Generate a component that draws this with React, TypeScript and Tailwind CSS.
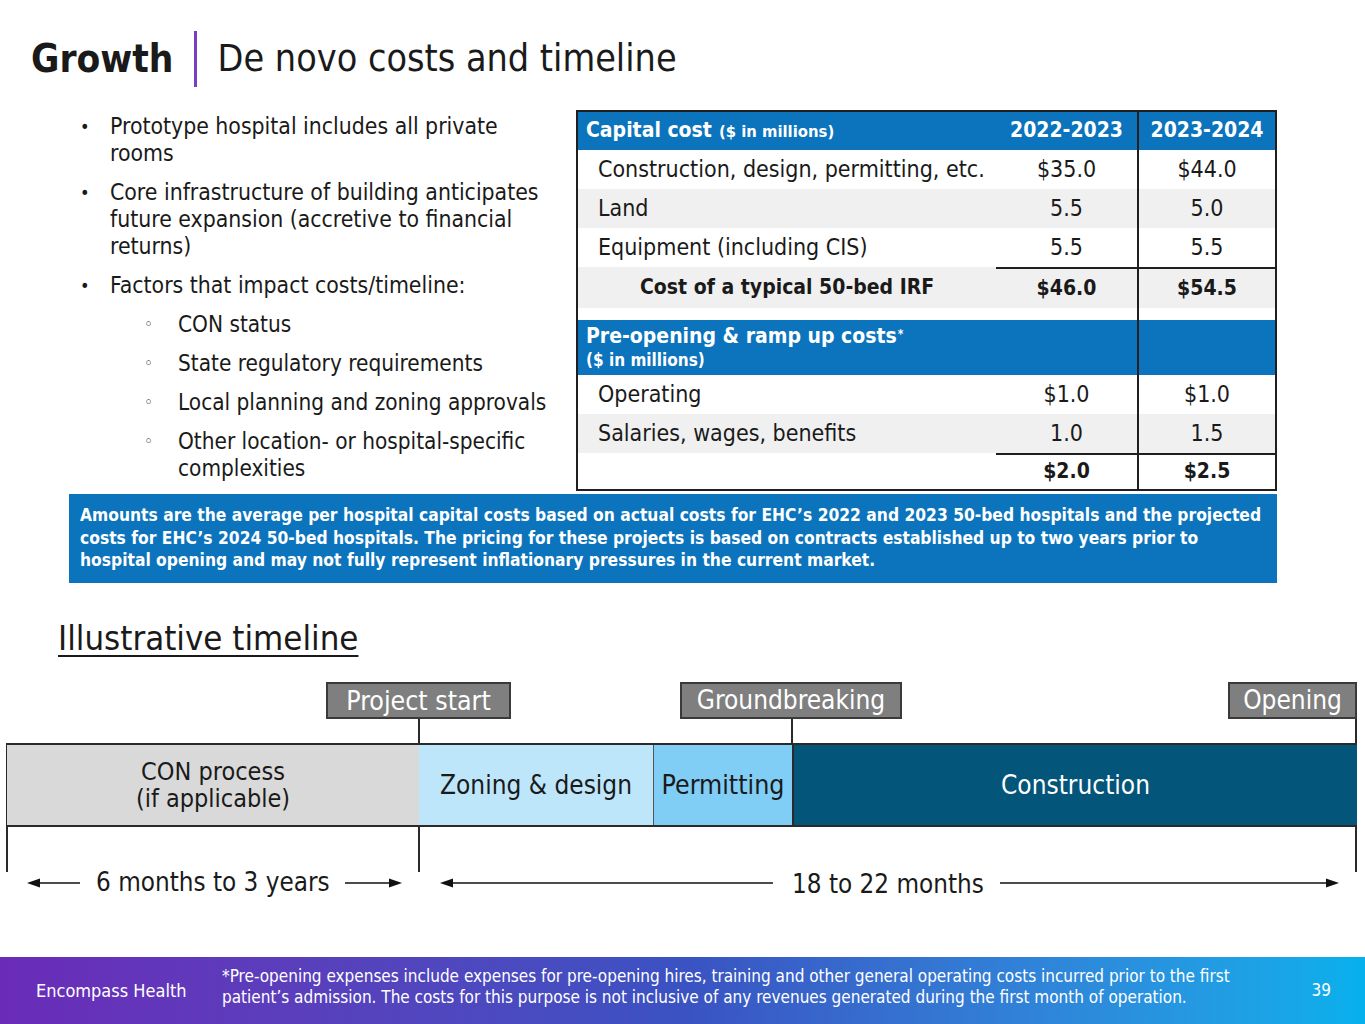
export default function App() {
  const blue = "bg-[#0b74bd]";
  return (
    <div className="w-[1365px] h-[1024px] bg-white flex flex-col overflow-hidden text-[#1a1a1a] font-['DejaVu_Sans_Condensed','DejaVu_Sans',sans-serif] font-stretch-condensed">
      {/* Header */}
      <div className="h-[110px] flex-none pl-[31px] pt-[31px]">
        <div className="flex items-center h-[56px]">
          <span className="text-[38.5px] font-bold leading-none">Growth</span>
          <span className="w-[3px] h-[56px] bg-[#7a3fc0] ml-[20px] mr-[21px]"></span>
          <span className="text-[37.4px] leading-none">De novo costs and timeline</span>
        </div>
      </div>

      {/* Content */}
      <div className="flex h-[381px] flex-none">
        <div className="w-[576px] flex-none pl-[80px] pt-[3px] text-[22.8px] leading-[27px]">
          <div className="flex">
            <span className="w-[30px] flex-none text-[18px]">•</span>
            <span>Prototype hospital includes all private<br />rooms</span>
          </div>
          <div className="flex mt-[12px]">
            <span className="w-[30px] flex-none text-[18px]">•</span>
            <span>Core infrastructure of building anticipates<br />future expansion (accretive to financial<br />returns)</span>
          </div>
          <div className="flex mt-[12px]">
            <span className="w-[30px] flex-none text-[18px]">•</span>
            <span>Factors that impact costs/timeline:</span>
          </div>
          {["CON status", "State regulatory requirements", "Local planning and zoning approvals"].map((t) => (
            <div key={t} className="flex mt-[12px] pl-[64px] text-[22.4px]">
              <span className="w-[34px] flex-none text-[17px]">◦</span>
              <span className="whitespace-nowrap">{t}</span>
            </div>
          ))}
          <div className="flex mt-[12px] pl-[64px] text-[22.4px]">
            <span className="w-[34px] flex-none text-[17px]">◦</span>
            <span>Other location- or hospital-specific<br />complexities</span>
          </div>
        </div>

        {/* Table */}
        <div className="w-[701px] flex-none border-2 border-[#1f1f1f] flex flex-col text-[23px]">
          <div className={`grid grid-cols-[418px_141px_1fr] h-[38px] ${blue} text-white font-bold text-[21px]`}>
            <div className="flex items-center pl-[8px]">
              Capital cost<span className="text-[16.5px] ml-[7px] mt-[2px]">($ in millions)</span>
            </div>
            <div className="flex items-center justify-center">2022-2023</div>
            <div className="flex items-center justify-center border-l-2 border-[#1f1f1f]">2023-2024</div>
          </div>
          {[
            ["Construction, design, permitting, etc.", "$35.0", "$44.0", false],
            ["Land", "5.5", "5.0", true],
            ["Equipment (including CIS)", "5.5", "5.5", false],
          ].map(([a, b, c, g]) => (
            <div key={a as string} className={`grid grid-cols-[418px_141px_1fr] h-[39px] ${g ? "bg-[#f0f0f0]" : "bg-white"}`}>
              <div className="flex items-center pl-[20px] whitespace-nowrap">{a}</div>
              <div className="flex items-center justify-center">{b}</div>
              <div className="flex items-center justify-center border-l-2 border-[#1f1f1f]">{c}</div>
            </div>
          ))}
          <div className="grid grid-cols-[418px_141px_1fr] h-[41px] bg-[#f0f0f0] font-bold text-[21px]">
            <div className="flex items-center pl-[62px]">Cost of a typical 50-bed IRF</div>
            <div className="flex items-center justify-center border-t-2 border-[#1f1f1f]">$46.0</div>
            <div className="flex items-center justify-center border-l-2 border-t-2 border-[#1f1f1f]">$54.5</div>
          </div>
          <div className="grid grid-cols-[418px_141px_1fr] h-[12px]">
            <div></div>
            <div></div>
            <div className="border-l-2 border-[#1f1f1f]"></div>
          </div>
          <div className={`grid grid-cols-[418px_141px_1fr] h-[55px] ${blue} text-white font-bold`}>
            <div className="col-span-2 flex flex-col justify-center pl-[8px]">
              <div className="leading-[25px] text-[21px]">
                Pre-opening &amp; ramp up costs<sup className="text-[12px] relative -top-[5px] ml-[1px]">*</sup>
              </div>
              <div className="text-[17px] leading-[22px]">($ in millions)</div>
            </div>
            <div className="border-l-2 border-[#1f1f1f]"></div>
          </div>
          {[
            ["Operating", "$1.0", "$1.0", false],
            ["Salaries, wages, benefits", "1.0", "1.5", true],
          ].map(([a, b, c, g]) => (
            <div key={a as string} className={`grid grid-cols-[418px_141px_1fr] h-[39px] ${g ? "bg-[#f0f0f0]" : "bg-white"}`}>
              <div className="flex items-center pl-[20px]">{a}</div>
              <div className="flex items-center justify-center">{b}</div>
              <div className="flex items-center justify-center border-l-2 border-[#1f1f1f]">{c}</div>
            </div>
          ))}
          <div className="grid grid-cols-[418px_141px_1fr] flex-1 font-bold text-[21px]">
            <div></div>
            <div className="flex items-center justify-center border-t-2 border-[#1f1f1f]">$2.0</div>
            <div className="flex items-center justify-center border-l-2 border-t-2 border-[#1f1f1f]">$2.5</div>
          </div>
        </div>
      </div>

      {/* Note */}
      <div className={`ml-[69px] mt-[3px] w-[1208px] h-[89px] flex-none ${blue} text-white font-bold text-[17.3px] leading-[22.5px] pl-[11px] pt-[10px] whitespace-nowrap`}>
        Amounts are the average per hospital capital costs based on actual costs for EHC’s 2022 and 2023 50-bed hospitals and the projected
        <br />
        costs for EHC’s 2024 50-bed hospitals. The pricing for these projects is based on contracts established up to two years prior to
        <br />
        hospital opening and may not fully represent inflationary pressures in the current market.
      </div>

      {/* Timeline title */}
      <div className="mt-[35px] h-[40px] flex-none pl-[58px] text-[34.5px] leading-[40px] underline underline-offset-[5px] decoration-[2px]">
        Illustrative timeline
      </div>

      {/* Timeline */}
      <div className="relative mt-[24px] h-[275px] flex-none">
        {/* labels */}
        <div className="absolute left-[326px] top-0 w-[185px] h-[37px] bg-[#7f7f7f] border-2 border-[#3a3a3a] text-white text-[26.5px] flex items-center justify-center">Project start</div>
        <div className="absolute left-[680px] top-0 w-[222px] h-[37px] bg-[#7f7f7f] border-2 border-[#3a3a3a] text-white text-[26px] flex items-center justify-center">Groundbreaking</div>
        <div className="absolute left-[1228px] top-0 w-[129px] h-[37px] bg-[#7f7f7f] border-2 border-[#3a3a3a] text-white text-[26px] flex items-center justify-center">Opening</div>

        {/* connector lines */}
        <div className="absolute left-[418px] top-[37px] w-[2px] h-[153px] bg-[#2a2a2a]"></div>
        <div className="absolute left-[791px] top-[37px] w-[2px] h-[25px] bg-[#2a2a2a]"></div>
        <div className="absolute left-[1355px] top-[37px] w-[2px] h-[153px] bg-[#2a2a2a]"></div>
        <div className="absolute left-[6px] top-[61px] w-[2px] h-[129px] bg-[#2a2a2a]"></div>

        {/* bar */}
        <div className="absolute left-[7px] top-[61px] w-[1350px] h-[84px] flex border-y-2 border-[#2a2a2a] text-[26px]">
          <div className="w-[412px] bg-[#d9d9d9] flex items-center justify-center text-center text-[25px] leading-[27px]">
            CON process<br />(if applicable)
          </div>
          <div className="w-[235px] bg-[#bee6fb] flex items-center justify-center border-r border-[#555]">Zoning &amp; design</div>
          <div className="w-[138px] bg-[#80cdf6] flex items-center justify-center text-[26.5px]">Permitting</div>
          <div className="flex-1 bg-[#04557a] text-white flex items-center justify-center border-l-2 border-[#2a2a2a]">Construction</div>
        </div>

        {/* arrows */}
        <svg className="absolute left-0 top-[193px]" width="1365" height="16" viewBox="0 0 1365 16">
          <line x1="38" y1="8" x2="80" y2="8" stroke="#111" strokeWidth="1.5" />
          <polygon points="27,8 40,3.5 40,12.5" fill="#111" />
          <line x1="345" y1="8" x2="390" y2="8" stroke="#111" strokeWidth="1.5" />
          <polygon points="402,8 389,3.5 389,12.5" fill="#111" />
          <line x1="452" y1="8" x2="773" y2="8" stroke="#111" strokeWidth="1.5" />
          <polygon points="440,8 453,3.5 453,12.5" fill="#111" />
          <line x1="1000" y1="8" x2="1326" y2="8" stroke="#111" strokeWidth="1.5" />
          <polygon points="1339,8 1326,3.5 1326,12.5" fill="#111" />
        </svg>
        <div className="absolute left-[96px] top-[185px] text-[25.8px] leading-[30px]">6 months to 3 years</div>
        <div className="absolute left-[792px] top-[187px] text-[25.8px] leading-[30px]">18 to 22 months</div>
      </div>

      {/* Footer */}
      <div className="mt-auto h-[67px] flex-none flex items-center bg-linear-to-r from-[#6a2bb8] via-[#3a52c2] to-[#05b0ec] text-white">
        <div className="w-[222px] flex-none pl-[36px] text-[18px] whitespace-nowrap">Encompass Health</div>
        <div className="flex-1 text-[17px] leading-[21px] whitespace-nowrap pb-[8px]">
          *Pre-opening expenses include expenses for pre-opening hires, training and other general operating costs incurred prior to the first
          <br />
          patient’s admission. The costs for this purpose is not inclusive of any revenues generated during the first month of operation.
        </div>
        <div className="w-[60px] flex-none pr-[34px] text-right text-[17px]">39</div>
      </div>
    </div>
  );
}
